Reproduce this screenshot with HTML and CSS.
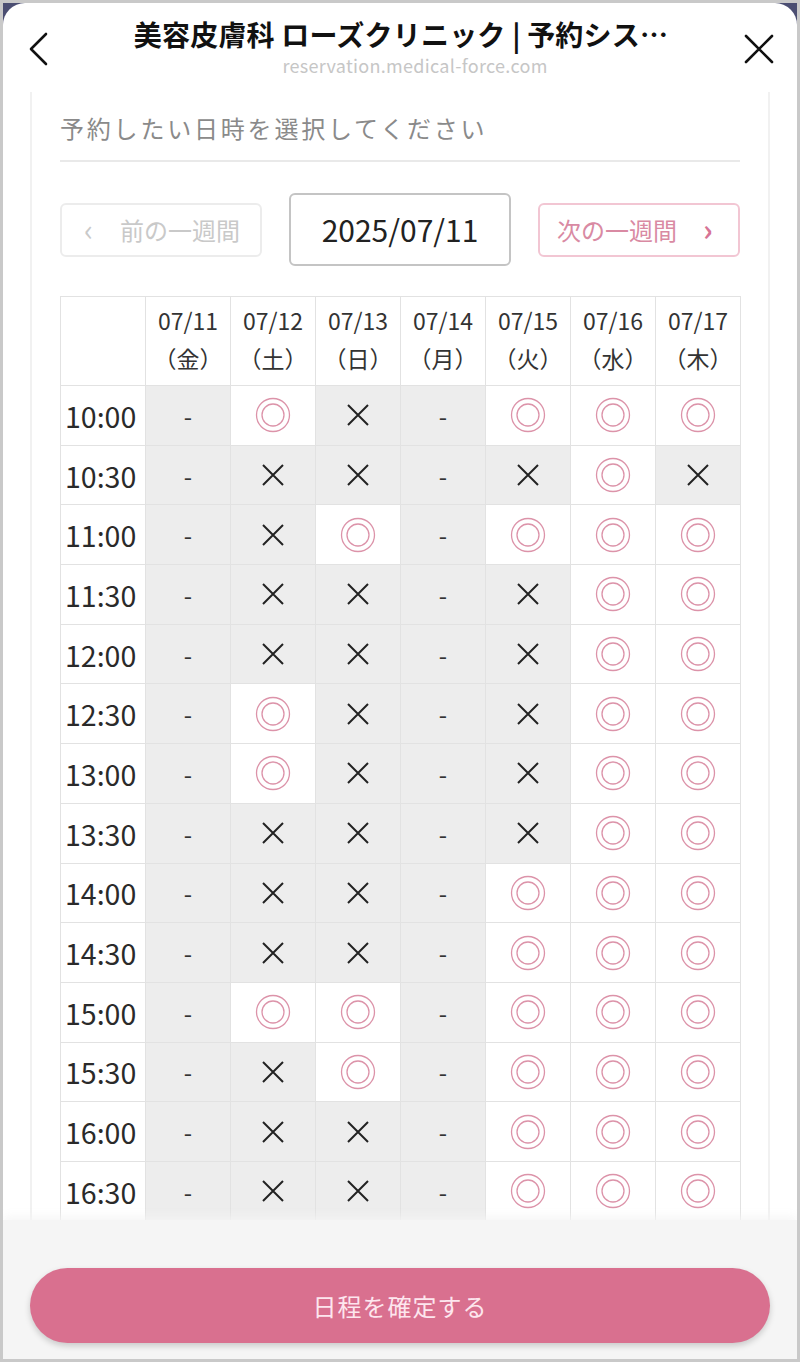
FILE: index.html
```html
<!doctype html>
<html lang="ja">
<head>
    <meta charset="UTF-8">
    <meta name="viewport" content="width=device-width, initial-scale=1.0">
    <title>予約システム</title>
    <link rel="stylesheet" href="styles.css">
</head>
<body>
    <div class="phone">
        <div class="topbar">
            <div class="icon back">
                <svg width="24" height="34" viewBox="0 0 24 34"><path d="M19 2 L4 17 L19 32" fill="none" stroke="#111" stroke-width="2.6" stroke-linecap="round" stroke-linejoin="round"/></svg>
            </div>
            <div class="title-box">
                <div class="title">美容皮膚科 ローズクリニック | 予約シス…</div>
                <div class="url">reservation.medical-force.com</div>
            </div>
            <div class="icon close">
                <svg width="32" height="32" viewBox="0 0 32 32"><path d="M3 3 L29 29 M29 3 L3 29" fill="none" stroke="#111" stroke-width="2.6" stroke-linecap="round"/></svg>
            </div>
        </div>

        <div class="card">
            <div class="lead">予約したい日時を選択してください</div>

            <div class="week-nav">
                <div class="btn prev"><span class="arrow">‹</span>前の一週間</div>
                <div class="date-box">2025/07/11</div>
                <div class="btn next">次の一週間<span class="arrow">›</span></div>
            </div>

            <table class="slots">
                <thead>
                    <tr>
                        <th></th>
                        <th>07/11<br>（金）</th>
                        <th>07/12<br>（土）</th>
                        <th>07/13<br>（日）</th>
                        <th>07/14<br>（月）</th>
                        <th>07/15<br>（火）</th>
                        <th>07/16<br>（水）</th>
                        <th>07/17<br>（木）</th>
                    </tr>
                </thead>
                <tbody class="slot-body"></tbody>
            </table>
        </div>

        <div class="footer">
            <div class="submit">日程を確定する</div>
        </div>
    </div>

    <script>
        let body = document.querySelector('.slot-body'),
            html = '';
        // d = 受付なし, x = 満枠, o = 空きあり
        let rows = [
            ['10:00', 'doxdooo'],
            ['10:30', 'dxxdxox'],
            ['11:00', 'dxodooo'],
            ['11:30', 'dxxdxoo'],
            ['12:00', 'dxxdxoo'],
            ['12:30', 'doxdxoo'],
            ['13:00', 'doxdxoo'],
            ['13:30', 'dxxdxoo'],
            ['14:00', 'dxxdooo'],
            ['14:30', 'dxxdooo'],
            ['15:00', 'doodooo'],
            ['15:30', 'dxodooo'],
            ['16:00', 'dxxdooo'],
            ['16:30', 'dxxdooo']
        ];
        let marks = {
            d: '<td class="off">-</td>',
            x: '<td class="off"><svg width="24" height="24" viewBox="0 0 24 24"><path d="M2 2 L22 22 M22 2 L2 22" stroke="#222" stroke-width="2" fill="none"/></svg></td>',
            o: '<td class="open"><svg width="36" height="36" viewBox="0 0 36 36"><circle cx="18" cy="18" r="16.5" fill="none" stroke="#dc93a9" stroke-width="1.3"/><circle cx="18" cy="18" r="11" fill="none" stroke="#dc93a9" stroke-width="1.3"/></svg></td>'
        };
        rows.forEach(function (r) {
            html += '<tr><th class="time">' + r[0] + '</th>';
            for (let i = 0; i < r[1].length; i++) {
                html += marks[r[1][i]];
            }
            html += '</tr>';
        });
        body.innerHTML = html;
    </script>
</body>
</html>
```

FILE: styles.css
```css
*{padding: 0;margin: 0;box-sizing: border-box}
body{
    position: relative;
    background: #c9c9c9;
    padding: 3px;
    font-family: "Noto Sans CJK JP", "Noto Sans", sans-serif;
    color: #222;
}
/* 上端の角に見える背景 */
body::before,
body::after{
    content: "";
    position: absolute;
    top: 3px;
    width: 22px;
    height: 22px;
    background: #4b4e72;
}
body::before{left: 3px}
body::after{right: 3px}
.phone{
    position: relative;
    z-index: 1;
    height: 1356px;
    background: #fff;
    border-radius: 22px 22px 0 0;
    overflow: hidden;
}

/* ヘッダー */
.topbar{
    height: 89px;
    display: flex;
    align-items: flex-start;
    padding: 0 22px 0 24px;
}
.topbar .icon{
    width: 40px;
    padding-top: 29px;
}
.topbar .close{
    text-align: right;
    padding-top: 30px;
}
.title-box{
    flex: 1;
    text-align: center;
    padding-top: 12px;
}
.title{
    font-size: 28px;
    font-weight: 700;
    line-height: 38px;
    color: #111;
    letter-spacing: 0.2px;
}
.url{
    font-size: 18px;
    line-height: 24px;
    color: #c6c6c6;
    letter-spacing: 0.3px;
    padding-left: 28px;
}

/* 本文 */
.card{
    margin: 0 27px;
    padding: 0 28px;
    border-left: 2px solid #f1f1f1;
    border-right: 2px solid #f1f1f1;
    height: 1300px;
}
.lead{
    padding: 19px 0 15px;
    font-size: 24px;
    line-height: 34px;
    letter-spacing: 2.8px;
    color: #8a8a8a;
    border-bottom: 2px solid #e9e9e9;
}
.week-nav{
    display: flex;
    align-items: center;
    justify-content: space-between;
    margin-top: 31px;
}
.week-nav .btn{
    width: 202px;
    height: 54px;
    border: 2px solid #ececec;
    border-radius: 6px;
    display: flex;
    align-items: center;
    font-size: 24px;
    color: #c9c9c9;
}
.week-nav .btn .arrow{
    font-size: 30px;
    line-height: 1;
    margin-top: -4px;
}
.week-nav .prev{
    padding-left: 22px;
}
.week-nav .prev .arrow{
    margin-right: 27px;
}
.week-nav .next{
    border-color: #f2c6d3;
    color: #d98aa3;
    padding-left: 17px;
}
.week-nav .next .arrow{
    margin-left: 26px;
    font-weight: 700;
    color: #d77495;
}
.date-box{
    width: 222px;
    height: 73px;
    border: 2px solid #c4c4c4;
    border-radius: 6px;
    text-align: center;
    line-height: 69px;
    font-size: 30px;
    color: #222;
}

/* 予約表 */
.slots{
    margin-top: 30px;
    width: 680px;
    table-layout: fixed;
    border-collapse: collapse;
}
.slots th,
.slots td{
    border: 1px solid #e2e2e2;
    width: 85px;
    text-align: center;
    vertical-align: middle;
}
.slots thead th{
    height: 89px;
    font-weight: 400;
    font-size: 23px;
    line-height: 38px;
    color: #333;
    padding-bottom: 4px;
}
.slots tbody tr{
    height: 59.7px;
}
.slots .time{
    font-weight: 400;
    font-size: 28.5px;
    color: #2a2a2a;
    text-align: left;
    padding-left: 4px;
}
.slots td.off{
    background: #ededed;
    font-size: 24px;
    color: #333;
}
.slots td.open{
    background: #fff;
}
.slots td svg{
    display: block;
    margin: 0 auto;
}

/* 確定ボタン */
.footer{
    position: absolute;
    left: 0;
    right: 0;
    bottom: 0;
    height: 139px;
    background: #f5f5f5;
    padding: 48px 27px 0;
    box-shadow: 0 -4px 8px rgba(245, 245, 245, 0.8);
}
.submit{
    height: 75px;
    border-radius: 38px;
    background: #d9708f;
    color: #fde6ee;
    font-size: 24px;
    letter-spacing: 1px;
    text-align: center;
    line-height: 75px;
    box-shadow: 0 3px 6px rgba(0, 0, 0, 0.18);
}
```
